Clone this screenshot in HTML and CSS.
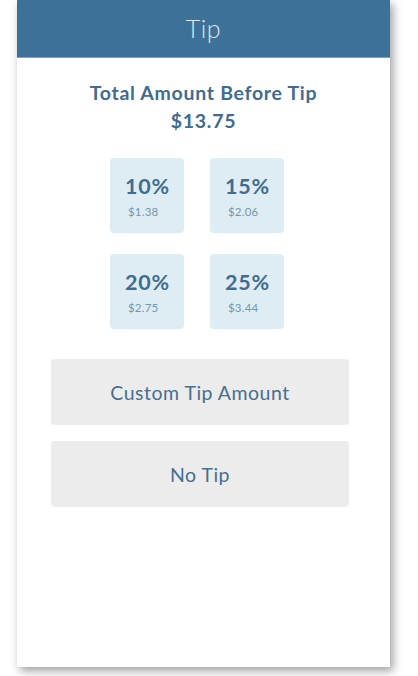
FILE: index.html
```html
<!DOCTYPE html>
<html>
<head>
<meta charset="utf-8">
<link rel="stylesheet" href="styles.css">
</head>
<body>
<div class="phone">
  <header class="bar"><span class="bar-title">Tip</span></header>
  <main class="content">
    <h1 class="total">Total Amount Before Tip<br>$13.75</h1>
    <div class="tiles">
      <button class="tile"><span class="pct">10%</span><span class="amt">$1.38</span></button>
      <button class="tile"><span class="pct">15%</span><span class="amt">$2.06</span></button>
      <button class="tile"><span class="pct">20%</span><span class="amt">$2.75</span></button>
      <button class="tile"><span class="pct">25%</span><span class="amt">$3.44</span></button>
    </div>
    <div class="actions">
      <button class="action">Custom Tip Amount</button>
      <button class="action">No Tip</button>
    </div>
  </main>
</div>
</body>
</html>
```
FILE: styles.css
```css
* { box-sizing: border-box; }
html, body { margin: 0; padding: 0; background: #ffffff; }
body { font-family: Lato, "Open Sans", sans-serif; width: 418px; height: 676px; overflow: hidden; }
.phone {
  margin-left: 17px;
  width: 373px;
  height: 667px;
  background: #ffffff;
  box-shadow: 3px 4px 9px rgba(0,0,0,0.38);
  display: flex;
  flex-direction: column;
}
.bar {
  height: 58px;
  background: #3e7197;
  border-bottom: 1px solid #7fa1bb;
  display: flex;
  align-items: center;
  justify-content: center;
}
.bar-title {
  color: #dde8f0;
  font-weight: 300;
  font-size: 25px;
  letter-spacing: 0.5px;
  margin-top: -2px;
}
.content { display: flex; flex-direction: column; }
.total {
  margin: 21px 0 0;
  text-align: center;
  color: #3f6c90;
  font-size: 19.5px;
  font-weight: 700;
  line-height: 28px;
  letter-spacing: 0.7px;
}
.tiles {
  margin: 23px 0 0 93px;
  display: grid;
  grid-template-columns: 74px 74px;
  grid-auto-rows: 75px;
  column-gap: 26px;
  row-gap: 21px;
}
.tile {
  border: none;
  background: #deedf3;
  border-radius: 4px;
  display: flex;
  flex-direction: column;
  align-items: flex-start;
  padding: 17px 0 0 15px;
  font-family: inherit;
}
.pct {
  color: #3f6c90;
  font-size: 21.5px;
  font-weight: 700;
  line-height: 22px;
  letter-spacing: 0.8px;
}
.amt {
  color: #7197b2;
  font-size: 11.5px;
  line-height: 14px;
  margin: 8px 0 0 3px;
  letter-spacing: 0.2px;
}
.actions {
  margin: 30px 0 0 34px;
  width: 298px;
  display: flex;
  flex-direction: column;
  gap: 16px;
}
.action {
  height: 66px;
  border: none;
  border-radius: 4px;
  background: #ececec;
  color: #466f91;
  font-family: inherit;
  font-size: 19.5px;
  font-weight: 400;
  letter-spacing: 0.5px;
}
```
